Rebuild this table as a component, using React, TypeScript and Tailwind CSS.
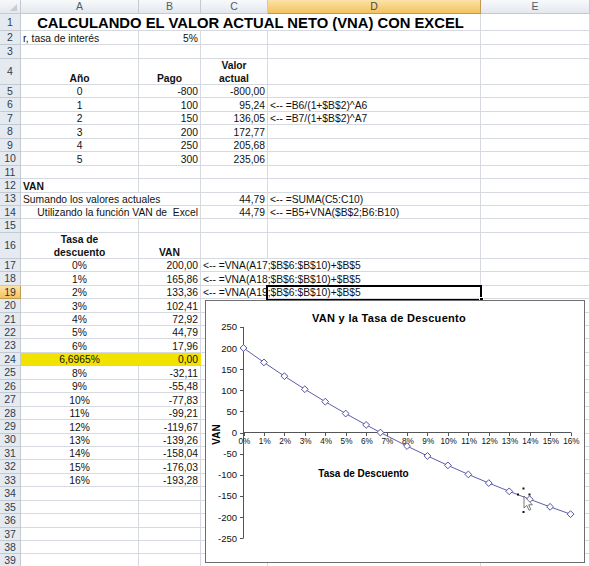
import React from 'react';

const W: Record<string, string> = {
  A: 'w-[118px]',
  B: 'w-[62px]',
  C: 'w-[67px]',
  D: 'w-[213px]',
  E: 'w-[109px]',
  AB: 'w-[180px]',
  CD: 'w-[280px]',
  ABCD: 'w-[460px]',
};

type Cell = { k: string; t?: string; lines?: string[]; a?: 'l' | 'c' | 'r'; b?: boolean; y?: boolean; title?: boolean; pre?: boolean };
type Row = { n: number; h: string; cells: Cell[] };

const COLS = ['A', 'B', 'C', 'D', 'E'];

function fill(cells: Cell[]): Cell[] {
  const out: Cell[] = [];
  let i = 0;
  while (i < COLS.length) {
    const col = COLS[i];
    const found = cells.find((c) => c.k[0] === col);
    if (found) {
      out.push(found);
      i += found.k.length;
    } else {
      out.push({ k: col });
      i += 1;
    }
  }
  return out;
}

const S = 'h-[13.45px]';

const pct: [string, string][] = [
  ['0%', '200,00'],
  ['1%', '165,86'],
  ['2%', '133,36'],
  ['3%', '102,41'],
  ['4%', '72,92'],
  ['5%', '44,79'],
  ['6%', '17,96'],
  ['6,6965%', '0,00'],
  ['8%', '-32,11'],
  ['9%', '-55,48'],
  ['10%', '-77,83'],
  ['11%', '-99,21'],
  ['12%', '-119,67'],
  ['13%', '-139,26'],
  ['14%', '-158,04'],
  ['15%', '-176,03'],
  ['16%', '-193,28'],
];

const rows: Row[] = [
  { n: 1, h: 'h-[17px]', cells: [{ k: 'ABCD', t: 'CALCULANDO EL VALOR ACTUAL NETO (VNA) CON EXCEL', a: 'c', title: true }] },
  { n: 2, h: 'h-[14px]', cells: [{ k: 'A', t: 'r, tasa de interés' }, { k: 'B', t: '5%', a: 'r' }] },
  { n: 3, h: 'h-[14px]', cells: [] },
  {
    n: 4,
    h: 'h-[26px]',
    cells: [
      { k: 'A', lines: ['Año'], a: 'c', b: true },
      { k: 'B', lines: ['Pago'], a: 'c', b: true },
      { k: 'C', lines: ['Valor', 'actual'], a: 'c', b: true },
    ],
  },
  { n: 5, h: S, cells: [{ k: 'A', t: '0', a: 'c' }, { k: 'B', t: '-800', a: 'r' }, { k: 'C', t: '-800,00', a: 'r' }] },
  {
    n: 6,
    h: S,
    cells: [{ k: 'A', t: '1', a: 'c' }, { k: 'B', t: '100', a: 'r' }, { k: 'C', t: '95,24', a: 'r' }, { k: 'D', t: '<-- =B6/(1+$B$2)^A6' }],
  },
  {
    n: 7,
    h: S,
    cells: [{ k: 'A', t: '2', a: 'c' }, { k: 'B', t: '150', a: 'r' }, { k: 'C', t: '136,05', a: 'r' }, { k: 'D', t: '<-- =B7/(1+$B$2)^A7' }],
  },
  { n: 8, h: S, cells: [{ k: 'A', t: '3', a: 'c' }, { k: 'B', t: '200', a: 'r' }, { k: 'C', t: '172,77', a: 'r' }] },
  { n: 9, h: S, cells: [{ k: 'A', t: '4', a: 'c' }, { k: 'B', t: '250', a: 'r' }, { k: 'C', t: '205,68', a: 'r' }] },
  { n: 10, h: S, cells: [{ k: 'A', t: '5', a: 'c' }, { k: 'B', t: '300', a: 'r' }, { k: 'C', t: '235,06', a: 'r' }] },
  { n: 11, h: S, cells: [] },
  { n: 12, h: S, cells: [{ k: 'A', t: 'VAN', b: true }] },
  {
    n: 13,
    h: S,
    cells: [{ k: 'AB', t: 'Sumando los valores actuales' }, { k: 'C', t: '44,79', a: 'r' }, { k: 'D', t: '<-- =SUMA(C5:C10)' }],
  },
  {
    n: 14,
    h: S,
    cells: [
      { k: 'AB', t: 'Utilizando la función VAN de  Excel', a: 'r', pre: true },
      { k: 'C', t: '44,79', a: 'r' },
      { k: 'D', t: '<-- =B5+VNA($B$2;B6:B10)' },
    ],
  },
  { n: 15, h: S, cells: [] },
  {
    n: 16,
    h: 'h-[26px]',
    cells: [
      { k: 'A', lines: ['Tasa de', 'descuento'], a: 'c', b: true },
      { k: 'B', lines: ['VAN'], a: 'c', b: true },
    ],
  },
  ...pct.map(([p, v], i) => {
    const n = 17 + i;
    const cells: Cell[] = [
      { k: 'A', t: p, a: 'c', y: n === 24 },
      { k: 'B', t: v, a: 'r', y: n === 24 },
    ];
    if (n <= 19) cells.push({ k: 'CD', t: `<-- =VNA(A${n};$B$6:$B$10)+$B$5` });
    return { n, h: S, cells };
  }),
  ...[34, 35, 36, 37, 38, 39].map((n) => ({ n, h: S, cells: [] as Cell[] })),
];

function CellView({ c }: { c: Cell }) {
  const just = c.a === 'r' ? 'justify-end pr-[2px]' : c.a === 'c' ? 'justify-center' : 'justify-start pl-[2px]';
  const border = c.y ? 'bg-[#f2e200] border-[#f2e200]' : 'border-[#d6dae0]';
  return (
    <div className={`flex shrink-0 items-end whitespace-nowrap border-r border-b ${border} ${W[c.k]} ${just}`}>
      {c.title ? (
        <span className="text-[14.8px] font-bold leading-[14px] text-black">{c.t}</span>
      ) : c.lines ? (
        <div className="flex flex-col items-center gap-[3px]">
          {c.lines.map((l) => (
            <span key={l} className="font-bold leading-[10px]">
              {l}
            </span>
          ))}
        </div>
      ) : c.t ? (
        <span className={`leading-[10px] ${c.b ? 'font-bold' : ''} ${c.pre ? 'whitespace-pre' : ''}`}>{c.t}</span>
      ) : null}
    </div>
  );
}

const data: [number, number][] = [
  [0, 200],
  [1, 165.86],
  [2, 133.36],
  [3, 102.41],
  [4, 72.92],
  [5, 44.79],
  [6, 17.96],
  [6.6965, 0],
  [8, -32.11],
  [9, -55.48],
  [10, -77.83],
  [11, -99.21],
  [12, -119.67],
  [13, -139.26],
  [14, -158.04],
  [15, -176.03],
  [16, -193.28],
];

const px = (p: number) => 37.5 + p * 20.44;
const py = (v: number) => 131.5 - v * 0.4225;

function Chart() {
  const font = "'Liberation Sans', Arial, sans-serif";
  const ys = [250, 200, 150, 100, 50, 0, -50, -100, -150, -200, -250];
  const xs = Array.from({ length: 17 }, (_, i) => i);
  const line = data.map(([p, v]) => `${px(p).toFixed(2)},${py(v).toFixed(2)}`).join(' ');
  return (
    <div className="absolute left-[205px] top-[300px] h-[263px] w-[380px] border border-[#6e6e6e] bg-white">
      <svg width="378" height="261" className="block">
        <text x="183" y="20.7" textAnchor="middle" fontFamily={font} fontSize="11" fontWeight="bold" letterSpacing="0.3" fill="#000">
          VAN y la Tasa de Descuento
        </text>
        <line x1="37.5" y1={py(250)} x2="37.5" y2={py(-250)} stroke="#555" strokeWidth="1" />
        {ys.map((v) => (
          <g key={v}>
            <line x1="34" y1={Math.round(py(v)) + 0.5} x2="37.5" y2={Math.round(py(v)) + 0.5} stroke="#555" strokeWidth="1" />
            <text x="31" y={py(v) + 3.5} textAnchor="end" fontFamily={font} fontSize="9.5" fill="#111">
              {v}
            </text>
          </g>
        ))}
        <line x1="37.5" y1="131.5" x2={px(16) + 0.5} y2="131.5" stroke="#555" strokeWidth="1" />
        {xs.map((p) => (
          <g key={p}>
            <line x1={Math.round(px(p)) + 0.5} y1="131.5" x2={Math.round(px(p)) + 0.5} y2="135" stroke="#555" strokeWidth="1" />
            <text x={px(p) + 0.8} y="143.3" textAnchor="middle" fontFamily={font} fontSize="8.2" fill="#111">
              {p}%
            </text>
          </g>
        ))}
        <text
          transform="translate(13.5,133.5) rotate(-90)"
          textAnchor="middle"
          fontFamily={font}
          fontSize="10"
          fontWeight="bold"
          fill="#000"
        >
          VAN
        </text>
        <text x="112.3" y="176" fontFamily={font} fontSize="10" fontWeight="bold" fill="#000">
          Tasa de Descuento
        </text>
        <polyline points={line} fill="none" stroke="#5d5daa" strokeWidth="1" />
        {data.map(([p, v]) => {
          const x = px(p);
          const y = py(v);
          return (
            <polygon
              key={p}
              points={`${x},${y - 3.4} ${x + 3.4},${y} ${x},${y + 3.4} ${x - 3.4},${y}`}
              fill="#fff"
              stroke="#3f3f9c"
              strokeWidth="0.9"
            />
          );
        })}
        {/* mouse cursor */}
        <g>
          <rect x="316.5" y="186.5" width="2" height="2" fill="#111" />
          <rect x="311" y="192.5" width="2" height="2" fill="#111" />
          <rect x="322.5" y="192.5" width="2" height="2" fill="#111" />
          <polygon
            points="318,195 318,207 320.8,204.4 323,209.3 324.8,208.5 322.7,203.8 326.4,203.8"
            fill="#fff"
            stroke="#555"
            strokeWidth="0.8"
          />
          <rect x="316.5" y="210" width="2" height="2" fill="#111" />
        </g>
      </svg>
    </div>
  );
}

export default function App() {
  return (
    <div className="relative h-[566px] w-[590px] overflow-hidden bg-white font-['Liberation_Sans',Arial,sans-serif] text-[10.3px] text-[#111]">
      {/* column header */}
      <div className="flex h-[14px]">
        <div className="relative w-[21px] shrink-0 border-r border-b border-[#c3cad4] bg-gradient-to-b from-[#f7f8fa] to-[#e4e8ee]">
          <div className="absolute right-[3px] bottom-[2px] h-0 w-0 border-b-[7px] border-l-[7px] border-b-[#c6ccd4] border-l-transparent" />
        </div>
        {COLS.map((c) => (
          <div
            key={c}
            className={`flex shrink-0 items-center justify-center border-r border-b text-[10.5px] leading-none ${W[c]} ${
              c === 'D'
                ? 'border-[#c29b4e] bg-gradient-to-b from-[#fbe3a6] to-[#f3c25e] text-[#4a4a4a]'
                : 'border-[#c3cad4] bg-gradient-to-b from-[#f8f9fb] to-[#e3e8ee] text-[#4f5d6e]'
            }`}
          >
            {c}
          </div>
        ))}
      </div>
      {rows.map((r) => (
        <div key={r.n} className={`flex ${r.h}`}>
          <div
            className={`flex w-[21px] shrink-0 items-center justify-center border-r border-b text-[10.5px] leading-none ${
              r.n === 19
                ? 'border-[#c29b4e] bg-gradient-to-b from-[#fbe3a6] to-[#f3c25e] text-[#333]'
                : 'border-[#c3cad4] bg-[#e5eaf0] text-[#2d3e52]'
            }`}
          >
            {r.n}
          </div>
          {fill(r.cells).map((c) => (
            <CellView key={c.k} c={c} />
          ))}
        </div>
      ))}
      {/* selected cell D19 */}
      <div className="absolute left-[266px] top-[284.5px] h-[16px] w-[216px] border-2 border-black" />
      <div className="absolute left-[479px] top-[297px] h-[5px] w-[5px] border border-white bg-black" />
      <Chart />
    </div>
  );
}
